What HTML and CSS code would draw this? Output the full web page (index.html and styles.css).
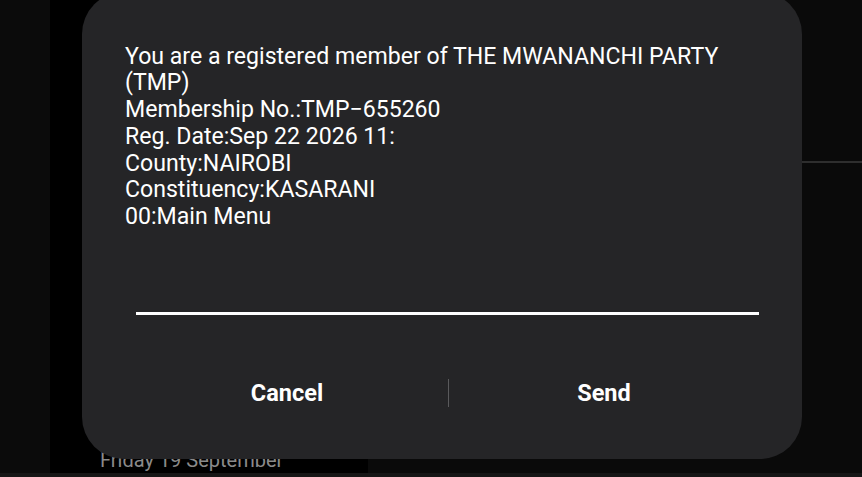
FILE: index.html
```html
<!DOCTYPE html>
<html>
<head>
<meta charset="utf-8">
<link rel="stylesheet" href="styles.css">
</head>
<body>
<div class="screen">
  <div class="strip-left"></div>
  <div class="panel">
    <div class="panel-date">Friday 19 September</div>
  </div>
  <div class="right">
    <div class="right-top"></div>
  </div>
</div>
<div class="bottom-strip"></div>

<div class="dialog">
  <div class="message">
    <div>You are a registered member of THE MWANANCHI PARTY</div>
    <div>(TMP)</div>
    <div>Membership No.:TMP−655260</div>
    <div>Reg. Date:Sep 22 2026 11:</div>
    <div>County:NAIROBI</div>
    <div>Constituency:KASARANI</div>
    <div>00:Main Menu</div>
  </div>
  <div class="input-line"></div>
  <div class="actions">
    <div class="btn btn-cancel">Cancel</div>
    <div class="sep"></div>
    <div class="btn btn-send">Send</div>
  </div>
</div>
</body>
</html>
```

FILE: styles.css
```css
html, body {
  margin: 0;
  padding: 0;
  width: 862px;
  height: 477px;
  overflow: hidden;
  background: #0a0a0a;
  font-family: Roboto, "Liberation Sans", sans-serif;
}
.screen {
  display: flex;
  height: 473px;
}
.strip-left {
  width: 50px;
  background: #0b0b0b;
}
.panel {
  width: 318px;
  background: #000;
  display: flex;
  flex-direction: column;
  justify-content: flex-end;
}
.panel-date {
  color: #8a8a8a;
  font-size: 20px;
  line-height: 20px;
  padding-left: 50px;
  margin-bottom: 3px;
}
.right {
  flex: 1;
  background: #0a0a0a;
}
.right-top {
  height: 161px;
  border-bottom: 2px solid #2e2e2e;
}
.bottom-strip {
  height: 4px;
  background: #161616;
}
.dialog {
  position: absolute;
  left: 82px;
  top: -8px;
  width: 720px;
  height: 467px;
  box-sizing: border-box;
  background: #252527;
  border-radius: 42px;
  padding: 51.5px 43px 0 43px;
  display: flex;
  flex-direction: column;
}
.message {
  color: #fff;
  font-size: 23.1px;
  line-height: 26.8px;
}
.input-line {
  margin: 80.5px 0 0 11px;
  height: 3px;
  background: #fff;
}
.actions {
  display: flex;
  align-items: center;
  margin: 61px 0 0 1px;
  height: 34px;
}
.btn {
  text-align: center;
  color: #fff;
  font-weight: 700;
  font-size: 23.5px;
}
.btn-cancel {
  flex: 0 0 322px;
}
.btn-send {
  flex: 1;
}
.sep {
  width: 1px;
  height: 28px;
  background: #5a5a5c;
}
```
